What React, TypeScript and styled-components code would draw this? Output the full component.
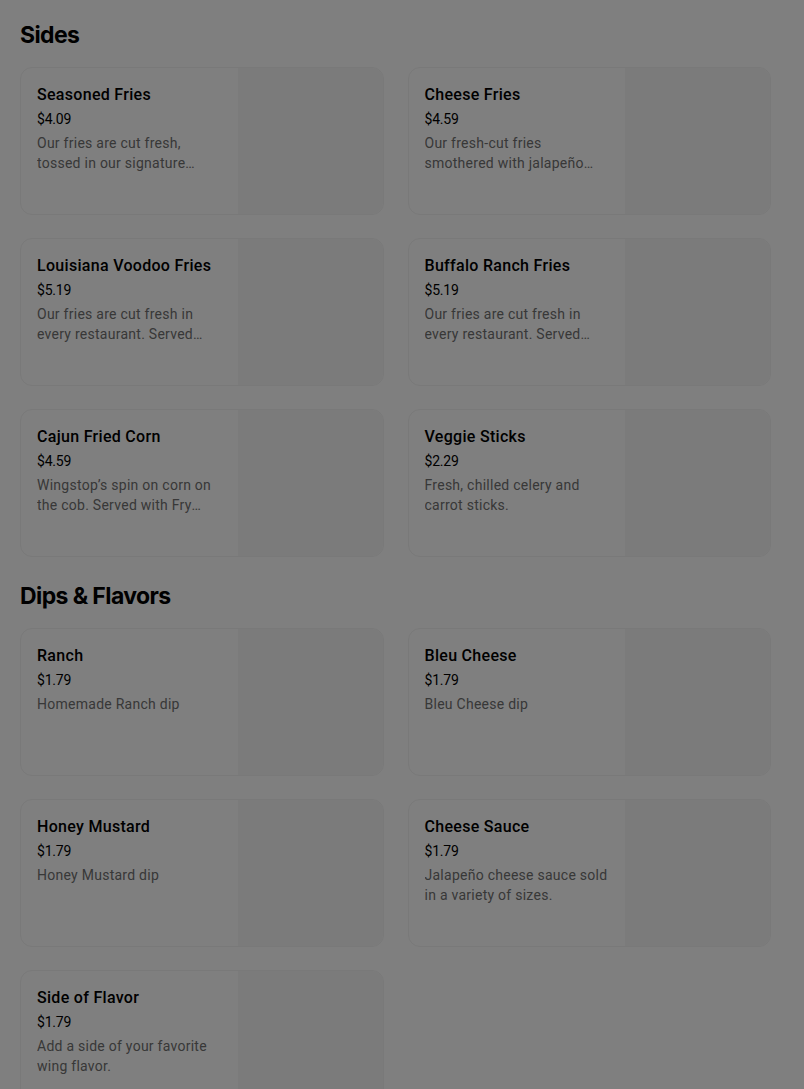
import styled, { createGlobalStyle } from 'styled-components'

type TItem = {
  name: string
  price: string
  desc: string
}

const sections: { title: string; items: TItem[] }[] = [
  {
    title: 'Sides',
    items: [
      { name: 'Seasoned Fries', price: '$4.09', desc: 'Our fries are cut fresh, tossed in our signature seasoning and served hot.' },
      { name: 'Cheese Fries', price: '$4.59', desc: 'Our fresh-cut fries smothered with jalapeño cheese sauce.' },
      { name: 'Louisiana Voodoo Fries', price: '$5.19', desc: 'Our fries are cut fresh in every restaurant. Served with cheese sauce and ranch.' },
      { name: 'Buffalo Ranch Fries', price: '$5.19', desc: 'Our fries are cut fresh in every restaurant. Served with buffalo and ranch.' },
      { name: 'Cajun Fried Corn', price: '$4.59', desc: 'Wingstop’s spin on corn on the cob. Served with Fry Seasoning and Cajun spice.' },
      { name: 'Veggie Sticks', price: '$2.29', desc: 'Fresh, chilled celery and carrot sticks.' },
    ],
  },
  {
    title: 'Dips & Flavors',
    items: [
      { name: 'Ranch', price: '$1.79', desc: 'Homemade Ranch dip' },
      { name: 'Bleu Cheese', price: '$1.79', desc: 'Bleu Cheese dip' },
      { name: 'Honey Mustard', price: '$1.79', desc: 'Honey Mustard dip' },
      { name: 'Cheese Sauce', price: '$1.79', desc: 'Jalapeño cheese sauce sold in a variety of sizes.' },
      { name: 'Side of Flavor', price: '$1.79', desc: 'Add a side of your favorite wing flavor.' },
    ],
  },
]

const App = () => {
  return (
    <>
      <GlobalStyle />
      <Page>
        {sections.map((section) => (
          <Section key={section.title}>
            <SectionTitle>{section.title}</SectionTitle>
            <Grid>
              {section.items.map((item) => (
                <Card key={item.name}>
                  <Info>
                    <Name>{item.name}</Name>
                    <Price>{item.price}</Price>
                    <Desc>{item.desc}</Desc>
                  </Info>
                  <Thumb />
                </Card>
              ))}
            </Grid>
          </Section>
        ))}
      </Page>
      <Overlay />
    </>
  )
}

export default App

const GlobalStyle = createGlobalStyle`
  html, body {
    margin: 0;
    padding: 0;
    background: #ffffff;
    overflow: hidden;
  }
  body {
    font-family: Roboto, 'Liberation Sans', sans-serif;
    color: #000000;
  }
`

const Page = styled.div`
  padding: 19px 33px 0 20px;
  display: flex;
  flex-direction: column;
  gap: 23px;
`

const Section = styled.section`
  display: flex;
  flex-direction: column;
  gap: 16px;
`

const SectionTitle = styled.h2`
  margin: 0;
  font-family: Inter, 'Liberation Sans', sans-serif;
  font-size: 23px;
  font-weight: 700;
  letter-spacing: -0.6px;
  line-height: 32px;
`

const Grid = styled.div`
  display: grid;
  grid-template-columns: 1fr 1fr;
  column-gap: 24px;
  row-gap: 23px;
`

const Card = styled.div`
  height: 148px;
  box-sizing: border-box;
  border: 1px solid #f2f2f2;
  border-radius: 12px;
  display: flex;
  overflow: hidden;
`

const Info = styled.div`
  flex: 1;
  min-width: 0;
  padding: 16px 16px 0 16px;
  display: flex;
  flex-direction: column;
`

const Name = styled.div`
  font-size: 16px;
  font-weight: 500;
  line-height: 22px;
  letter-spacing: 0.3px;
  color: #000000;
`

const Price = styled.div`
  margin-top: 3px;
  font-size: 14px;
  line-height: 20px;
  color: #000000;
  letter-spacing: -0.2px;
`

const Desc = styled.div`
  margin-top: 4px;
  font-size: 14px;
  line-height: 20px;
  letter-spacing: 0.26px;
  color: #707070;
  display: -webkit-box;
  -webkit-line-clamp: 2;
  -webkit-box-orient: vertical;
  overflow: hidden;
`

const Thumb = styled.div`
  width: 145px;
  flex-shrink: 0;
  background: #f7f7f7;
`

const Overlay = styled.div`
  position: fixed;
  inset: 0;
  background: rgba(0, 0, 0, 0.5);
`
